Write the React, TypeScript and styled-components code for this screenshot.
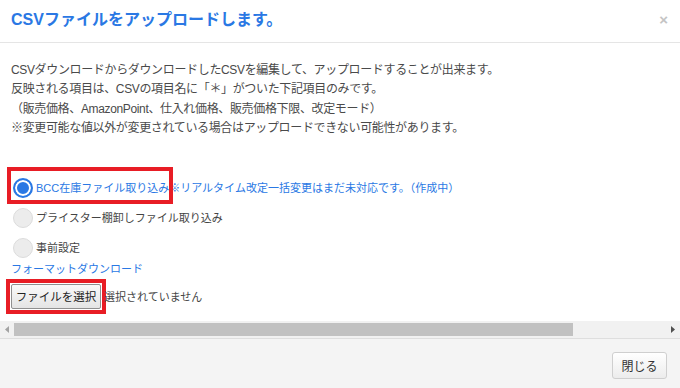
import styled, { createGlobalStyle } from "styled-components";

const GlobalStyle = createGlobalStyle`
  html, body {
    margin: 0;
    padding: 0;
    background: #fff;
  }
  body {
    font-family: "Liberation Sans", "Noto Sans CJK JP", sans-serif;
    font-size: 12px;
    color: #444;
  }
`;

const BLUE = "#2a78e4";
const RED = "#e81d25";

export default function App() {
  return (
    <>
      <GlobalStyle />
      <Modal>
        <Header>
          <Title>CSVファイルをアップロードします。</Title>
          <CloseX>×</CloseX>
        </Header>

        <Body>
          <Notes>
            <div>CSVダウンロードからダウンロードしたCSVを編集して、アップロードすることが出来ます。</div>
            <div>反映される項目は、CSVの項目名に「＊」がついた下記項目のみです。</div>
            <div>（販売価格、AmazonPoint、仕入れ価格、販売価格下限、改定モード）</div>
            <div>※変更可能な値以外が変更されている場合はアップロードできない可能性があります。</div>
          </Notes>

          <Options>
            <OptionRow>
              <OptionLabel $highlight>
                <Radio $checked />
                <OptionText $active>BCC在庫ファイル取り込み</OptionText>
              </OptionLabel>
              <OptionText $active>※リアルタイム改定一括変更はまだ未対応です。（作成中）</OptionText>
            </OptionRow>
            <OptionRow>
              <OptionLabel>
                <Radio />
                <OptionText>プライスター棚卸しファイル取り込み</OptionText>
              </OptionLabel>
            </OptionRow>
            <OptionRow>
              <OptionLabel>
                <Radio />
                <OptionText>事前設定</OptionText>
              </OptionLabel>
            </OptionRow>
          </Options>

          <FormatLink>フォーマットダウンロード</FormatLink>

          <FileRow>
            <FileHighlight>
              <FileButton>ファイルを選択</FileButton>
            </FileHighlight>
            <FileStatus>選択されていません</FileStatus>
          </FileRow>
        </Body>

        <ScrollBar>
          <ScrollArrow>
            <svg width="4" height="7" viewBox="0 0 4 7">
              <path d="M4 0 L0 3.5 L4 7 Z" fill="#a3a3a3" />
            </svg>
          </ScrollArrow>
          <ScrollTrack>
            <ScrollThumb />
          </ScrollTrack>
          <ScrollArrow>
            <svg width="4" height="7" viewBox="0 0 4 7">
              <path d="M0 0 L4 3.5 L0 7 Z" fill="#505050" />
            </svg>
          </ScrollArrow>
        </ScrollBar>

        <Footer>
          <CloseButton>閉じる</CloseButton>
        </Footer>
      </Modal>
    </>
  );
}

const Modal = styled.div`
  width: 680px;
  height: 388px;
  display: flex;
  flex-direction: column;
  background: #fff;
  overflow: hidden;
`;

const Header = styled.div`
  height: 43px;
  box-sizing: border-box;
  border-bottom: 1px solid #e5e5e5;
  display: flex;
  align-items: center;
  justify-content: space-between;
  padding: 0 12px 0 11px;
  flex-shrink: 0;
`;

const Title = styled.h4`
  margin: 0;
  color: ${BLUE};
  font-size: 16px;
  font-weight: 700;
  line-height: 20px;
  margin-top: -2px;
`;

const CloseX = styled.span`
  color: #c4c4c4;
  font-size: 15px;
  font-weight: 700;
  line-height: 1;
  margin-top: -4px;
`;

const Body = styled.div`
  height: 278px;
  box-sizing: border-box;
  padding: 18px 11px 0 11px;
  flex-shrink: 0;
`;

const Notes = styled.div`
  line-height: 19.4px;
  font-size: 12px;
  letter-spacing: -0.35px;
  color: #4a4a4a;
  white-space: nowrap;
`;

const Options = styled.div`
  display: flex;
  flex-direction: column;
  gap: 10px;
  margin-top: 39px;
  margin-left: 2px;
`;

const OptionRow = styled.div`
  display: flex;
  align-items: center;
  height: 20px;
`;

const OptionLabel = styled.label<{ $highlight?: boolean }>`
  position: relative;
  display: inline-flex;
  align-items: center;
  gap: 3px;

  ${(p) =>
    p.$highlight &&
    `
    &::after {
      content: "";
      position: absolute;
      top: -11px;
      bottom: -6px;
      left: -6px;
      right: -4px;
      border: 4px solid ${RED};
      pointer-events: none;
    }
  `}
`;

const Radio = styled.span<{ $checked?: boolean }>`
  width: 20px;
  height: 20px;
  box-sizing: border-box;
  border-radius: 50%;
  flex-shrink: 0;
  ${(p) =>
    p.$checked
      ? `
    border: 2px solid ${BLUE};
    background: ${BLUE};
    box-shadow: inset 0 0 0 2px #fff;
  `
      : `
    border: 1px solid #dcdcdc;
    background: #ececec;
  `}
`;

const OptionText = styled.span<{ $active?: boolean }>`
  font-size: 11px;
  line-height: 18px;
  white-space: nowrap;
  color: ${(p) => (p.$active ? BLUE : "#444")};
`;

const FormatLink = styled.a`
  display: block;
  margin-top: 2px;
  color: ${BLUE};
  font-size: 11px;
  line-height: 18px;
  cursor: pointer;
`;

const FileRow = styled.div`
  display: flex;
  align-items: center;
  margin-top: 1px;
  margin-left: -5px;
`;

const FileHighlight = styled.span`
  display: inline-flex;
  padding: 1px;
  border: 4px solid ${RED};
`;

const FileButton = styled.button`
  width: 90px;
  height: 25px;
  box-sizing: border-box;
  padding: 0;
  white-space: nowrap;
  font-family: "Liberation Sans", "Noto Sans CJK JP", sans-serif;
  font-size: 11.5px;
  color: #222;
  border: 1px solid #8f8f8f;
  border-radius: 2px;
  background: linear-gradient(#fafafa, #e4e4e4);
`;

const FileStatus = styled.span`
  margin-left: -2px;
  font-size: 11px;
  color: #444;
`;

const ScrollBar = styled.div`
  height: 17px;
  display: flex;
  align-items: center;
  background: #f1f1f1;
  flex-shrink: 0;
`;

const ScrollArrow = styled.div`
  width: 14px;
  height: 17px;
  display: flex;
  align-items: center;
  justify-content: center;
`;

const ScrollTrack = styled.div`
  flex: 1;
  height: 13px;
  display: flex;
`;

const ScrollThumb = styled.div`
  width: 559px;
  background: #c1c1c1;
`;

const Footer = styled.div`
  flex: 1;
  background: #f4f4f4;
  border-top: 1px solid #dedede;
  display: flex;
  justify-content: flex-end;
  align-items: flex-start;
  padding: 13px 13px 0 0;
`;

const CloseButton = styled.button`
  width: 55px;
  height: 27px;
  box-sizing: border-box;
  font-family: "Liberation Sans", "Noto Sans CJK JP", sans-serif;
  font-size: 12px;
  color: #333;
  border: 1px solid #cfcfcf;
  border-radius: 3px;
  background: linear-gradient(#ffffff, #ececec);
  padding: 0;
`;
